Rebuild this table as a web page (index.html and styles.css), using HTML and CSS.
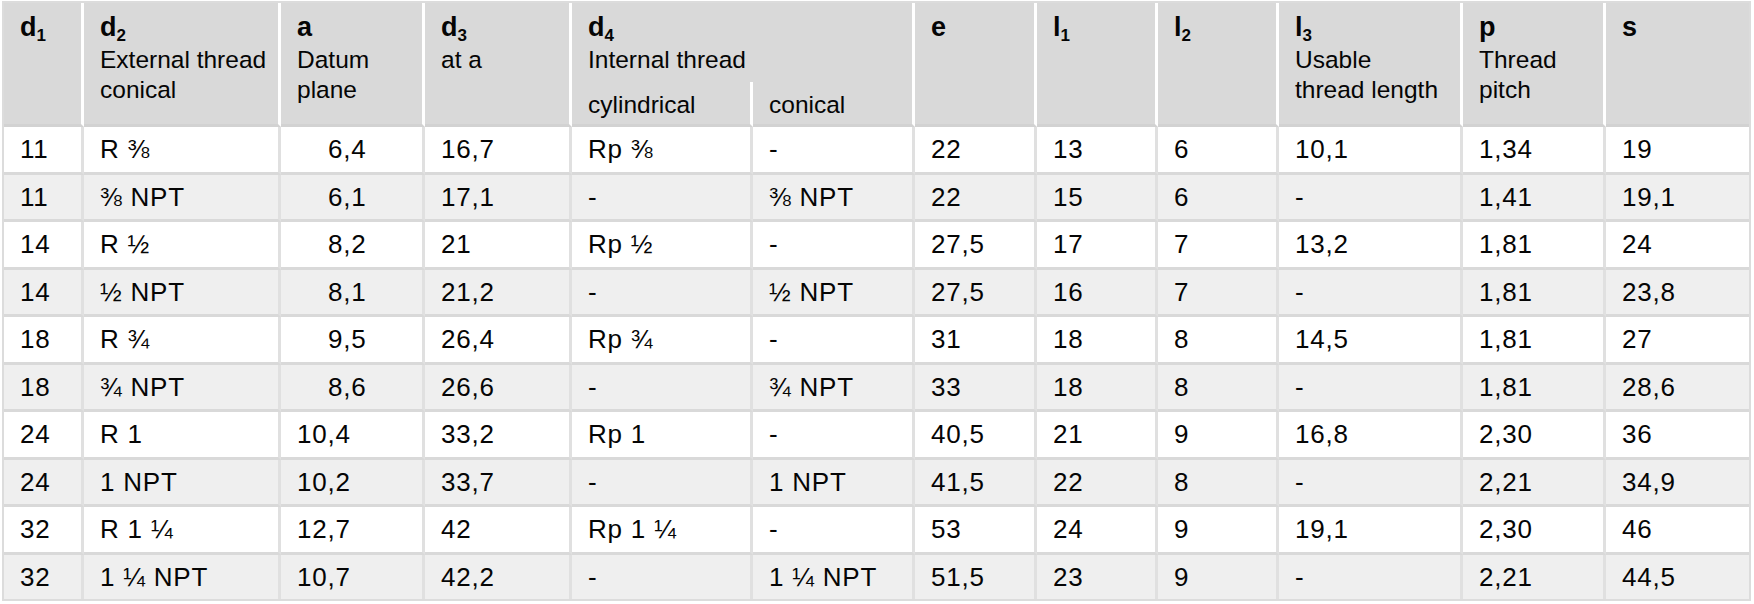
FILE: index.html
```html
<!DOCTYPE html>
<html lang="en">
<head>
<meta charset="utf-8">
<title>Thread dimensions</title>
<link rel="stylesheet" href="styles.css">
</head>
<body>
<table class="spec">
  <colgroup>
    <col class="c1"><col class="c2"><col class="c3"><col class="c4"><col class="c5"><col class="c6">
    <col class="c7"><col class="c8"><col class="c9"><col class="c10"><col class="c11"><col class="c12">
  </colgroup>
  <thead>
    <tr>
      <th rowspan="2"><b class="sym">d<span class="sb">1</span></b></th>
      <th rowspan="2"><b class="sym">d<span class="sb">2</span></b>External thread<br>conical</th>
      <th rowspan="2"><b class="sym">a</b>Datum<br>plane</th>
      <th rowspan="2"><b class="sym">d<span class="sb">3</span></b>at a</th>
      <th colspan="2" class="group"><b class="sym">d<span class="sb">4</span></b>Internal thread</th>
      <th rowspan="2"><b class="sym">e</b></th>
      <th rowspan="2"><b class="sym">l<span class="sb">1</span></b></th>
      <th rowspan="2"><b class="sym">l<span class="sb">2</span></b></th>
      <th rowspan="2"><b class="sym">l<span class="sb">3</span></b>Usable<br>thread length</th>
      <th rowspan="2"><b class="sym">p</b>Thread<br>pitch</th>
      <th rowspan="2" class="last"><b class="sym">s</b></th>
    </tr>
    <tr>
      <th class="subh">cylindrical</th>
      <th class="subh">conical</th>
    </tr>
  </thead>
  <tbody>
    <tr><td>11</td><td>R ⅜</td><td><span class="fig">6,4</span></td><td>16,7</td><td>Rp ⅜</td><td>-</td><td>22</td><td>13</td><td>6</td><td>10,1</td><td>1,34</td><td>19</td></tr>
    <tr><td>11</td><td>⅜ NPT</td><td><span class="fig">6,1</span></td><td>17,1</td><td>-</td><td>⅜ NPT</td><td>22</td><td>15</td><td>6</td><td>-</td><td>1,41</td><td>19,1</td></tr>
    <tr><td>14</td><td>R ½</td><td><span class="fig">8,2</span></td><td>21</td><td>Rp ½</td><td>-</td><td>27,5</td><td>17</td><td>7</td><td>13,2</td><td>1,81</td><td>24</td></tr>
    <tr><td>14</td><td>½ NPT</td><td><span class="fig">8,1</span></td><td>21,2</td><td>-</td><td>½ NPT</td><td>27,5</td><td>16</td><td>7</td><td>-</td><td>1,81</td><td>23,8</td></tr>
    <tr><td>18</td><td>R ¾</td><td><span class="fig">9,5</span></td><td>26,4</td><td>Rp ¾</td><td>-</td><td>31</td><td>18</td><td>8</td><td>14,5</td><td>1,81</td><td>27</td></tr>
    <tr><td>18</td><td>¾ NPT</td><td><span class="fig">8,6</span></td><td>26,6</td><td>-</td><td>¾ NPT</td><td>33</td><td>18</td><td>8</td><td>-</td><td>1,81</td><td>28,6</td></tr>
    <tr><td>24</td><td>R 1</td><td>10,4</td><td>33,2</td><td>Rp 1</td><td>-</td><td>40,5</td><td>21</td><td>9</td><td>16,8</td><td>2,30</td><td>36</td></tr>
    <tr><td>24</td><td>1 NPT</td><td>10,2</td><td>33,7</td><td>-</td><td>1 NPT</td><td>41,5</td><td>22</td><td>8</td><td>-</td><td>2,21</td><td>34,9</td></tr>
    <tr><td>32</td><td>R 1 ¼</td><td>12,7</td><td>42</td><td>Rp 1 ¼</td><td>-</td><td>53</td><td>24</td><td>9</td><td>19,1</td><td>2,30</td><td>46</td></tr>
    <tr><td>32</td><td>1 ¼ NPT</td><td>10,7</td><td>42,2</td><td>-</td><td>1 ¼ NPT</td><td>51,5</td><td>23</td><td>9</td><td>-</td><td>2,21</td><td>44,5</td></tr>
  </tbody>
</table>
</body>
</html>
```
FILE: styles.css
```css
* { box-sizing: border-box; }
html, body { margin: 0; padding: 0; background: #fff; }
body {
  padding: 1px 0 0 2px;
  font-family: "Liberation Sans", Arial, sans-serif;
  color: #050505;
}
.spec {
  border-collapse: separate;
  border-spacing: 0;
  table-layout: fixed;
  width: 1749px;
  border: 2px solid #dcdcdc;
  font-size: 26px;
}
.c1 { width: 80px; }
.c2 { width: 197px; }
.c3 { width: 144px; }
.c4 { width: 147px; }
.c5 { width: 181px; }
.c6 { width: 162px; }
.c7 { width: 122px; }
.c8 { width: 121px; }
.c9 { width: 121px; }
.c10 { width: 184px; }
.c11 { width: 143px; }
.c12 { width: 143px; }

th {
  background: #d9d9d9;
  text-align: left;
  vertical-align: top;
  font-weight: normal;
  font-size: 24.5px;
  line-height: 30px;
  padding: 6px 0 0 16px;
  border-right: 3px solid #fff;
  border-bottom: 3px solid #d2d2d2;
  white-space: nowrap;
}
.sym {
  display: block;
  font-weight: bold;
  font-size: 27px;
  line-height: 36px;
}
th.last { border-right: none; }
th.group { border-bottom: none; height: 79px; }
th.subh { height: 45px; vertical-align: middle; padding-top: 3px; }
.sb { font-size: 17px; vertical-align: -5px; line-height: 0; }

td {
  height: 47.5px;
  padding: 0 0 0 16px;
  vertical-align: middle;
  line-height: 1;
  letter-spacing: 0.8px;
  white-space: nowrap;
  border-right: 3px solid #e0e0e0;
  border-bottom: 3px solid #d9d9d9;
}
td:last-child { border-right: none; }
tbody tr:nth-child(even) td { background: #efefef; }
tbody tr:last-child td { border-bottom: none; height: 44.5px; }
.fig { padding-left: 31px; }
```
